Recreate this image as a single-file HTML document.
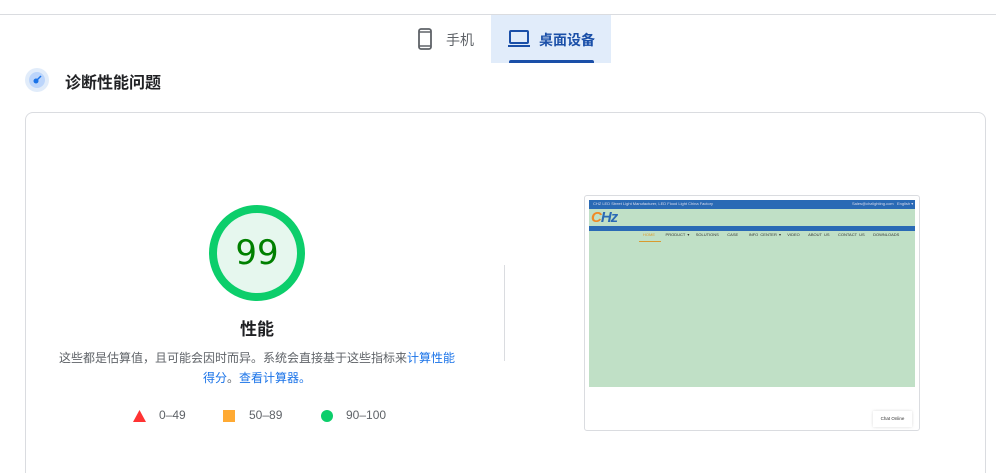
<!DOCTYPE html>
<html><head><meta charset="utf-8"><style>
*{margin:0;padding:0;box-sizing:border-box}
html,body{width:996px;height:473px;overflow:hidden}
body{background:#fff;font-family:"Liberation Sans","Noto Sans CJK SC",sans-serif;position:relative}
.a{position:absolute}
</style></head><body>
<div class="a" style="left:0;top:14px;width:996px;height:1px;background:#dadce0"></div>
<div class="a" style="left:491px;top:15px;width:120px;height:48px;background:#e1ecfa"></div>
<div class="a" style="left:509px;top:60px;width:85px;height:3px;background:#1a4fa8;border-radius:2px 2px 0 0"></div>
<svg class="a" style="left:418px;top:28px" width="14" height="22" viewBox="0 0 14 22"><rect x="1" y="1" width="12" height="20" rx="2" fill="none" stroke="#5f6368" stroke-width="1.8"/><line x1="1" y1="4" x2="13" y2="4" stroke="#5f6368" stroke-width="1.5"/><line x1="1" y1="18" x2="13" y2="18" stroke="#5f6368" stroke-width="1.5"/></svg>
<div class="a" style="left:446px;top:30px;font-size:14px;color:#5f6368">手机</div>
<svg class="a" style="left:507px;top:29px" width="24" height="20" viewBox="0 0 24 20"><rect x="3" y="2" width="18" height="12" rx="1" fill="none" stroke="#1a4fa8" stroke-width="2"/><rect x="1" y="16" width="22" height="2" fill="#1a4fa8"/></svg>
<div class="a" style="left:539px;top:30px;font-size:14px;color:#1a4fa8;font-weight:bold">桌面设备</div>
<svg class="a" style="left:24px;top:67px" width="26" height="26"><circle cx="13" cy="13" r="12" fill="#e1ecfa"/><circle cx="13" cy="13" r="8" fill="#bcd5fb"/><circle cx="12" cy="14" r="2.5" fill="#1a73e8"/><line x1="12" y1="14" x2="17" y2="9" stroke="#1a73e8" stroke-width="1.5"/></svg>
<div class="a" style="left:65px;top:69px;font-size:16px;color:#202124;font-weight:bold">诊断性能问题</div>
<div class="a" style="left:25px;top:112px;width:961px;height:361px;border:1px solid #dadce0;border-bottom:none;border-radius:8px 8px 0 0"></div>
<svg class="a" style="left:205px;top:201px" width="104" height="104"><circle cx="52" cy="52" r="44" fill="#e6f7ee" stroke="#0cce6b" stroke-width="8"/></svg>
<div class="a" style="left:205px;top:233px;width:104px;text-align:center;font-size:34px;color:#008000;font-family:'DejaVu Sans',sans-serif">99</div>
<div class="a" style="left:207px;top:315px;width:100px;text-align:center;font-size:17px;color:#202124;font-weight:bold">性能</div>
<div class="a" style="left:56px;top:348px;width:402px;text-align:center;font-size:12px;line-height:20px;color:#5f6368">这些都是估算值，且可能会因时而异。系统会直接基于这些指标来<span style="color:#1a73e8">计算性能得分</span>。<span style="color:#1a73e8">查看计算器。</span></div>
<svg class="a" style="left:133px;top:410px" width="13" height="12"><polygon points="6.5,0 13,12 0,12" fill="#ff3333"/></svg>
<div class="a" style="left:159px;top:408px;font-size:12px;color:#5f6368">0–49</div>
<div class="a" style="left:223px;top:410px;width:12px;height:12px;background:#ffaa33"></div>
<div class="a" style="left:249px;top:408px;font-size:12px;color:#5f6368">50–89</div>
<div class="a" style="left:321px;top:410px;width:12px;height:12px;border-radius:50%;background:#0cce6b"></div>
<div class="a" style="left:346px;top:408px;font-size:12px;color:#5f6368">90–100</div>
<div class="a" style="left:504px;top:265px;width:1px;height:96px;background:#dadce0"></div>
<div class="a" style="left:584px;top:195px;width:336px;height:236px;border:1px solid #dadce0;border-radius:3px;background:#fff"></div>
<div class="a" style="left:589px;top:200px;width:326px;height:187px;background:#c0e0c6"></div>
<div class="a" style="left:589px;top:200px;width:326px;height:9px;background:#2a6ab5"></div>
<div class="a" style="left:593px;top:201px;font-size:4px;color:#dde">CHZ LED Street Light Manufacturer, LED Flood Light China Factory</div>
<div class="a" style="left:852px;top:201px;font-size:4px;color:#dde">Sales@chzlighting.com &nbsp; English ▾</div>
<div class="a" style="left:591px;top:209px;font-size:15px;font-weight:bold;font-style:italic;color:#f08a24;letter-spacing:-1px">C<span style="color:#2a6ab5">Hz</span></div>
<div class="a" style="left:589px;top:226px;width:326px;height:5px;background:#2a6ab5"></div>
<div class="a" style="left:643px;top:232px;font-size:4px;color:#333;word-spacing:1px;white-space:nowrap"><span style="color:#d89a30">HOME</span> &nbsp; &nbsp; PRODUCT ▾ &nbsp; SOLUTIONS &nbsp; &nbsp;CASE &nbsp; &nbsp; INFO CENTER ▾ &nbsp; VIDEO &nbsp; &nbsp;ABOUT US &nbsp; &nbsp;CONTACT US &nbsp; &nbsp;DOWNLOADS</div>
<div class="a" style="left:639px;top:241px;width:22px;height:1px;background:#d89a30"></div>
<div class="a" style="left:873px;top:411px;width:39px;height:16px;background:#fff;box-shadow:0 0 3px rgba(0,0,0,.15);font-size:4.5px;color:#333;text-align:center;line-height:16px">Chat Online</div>
</body></html>
